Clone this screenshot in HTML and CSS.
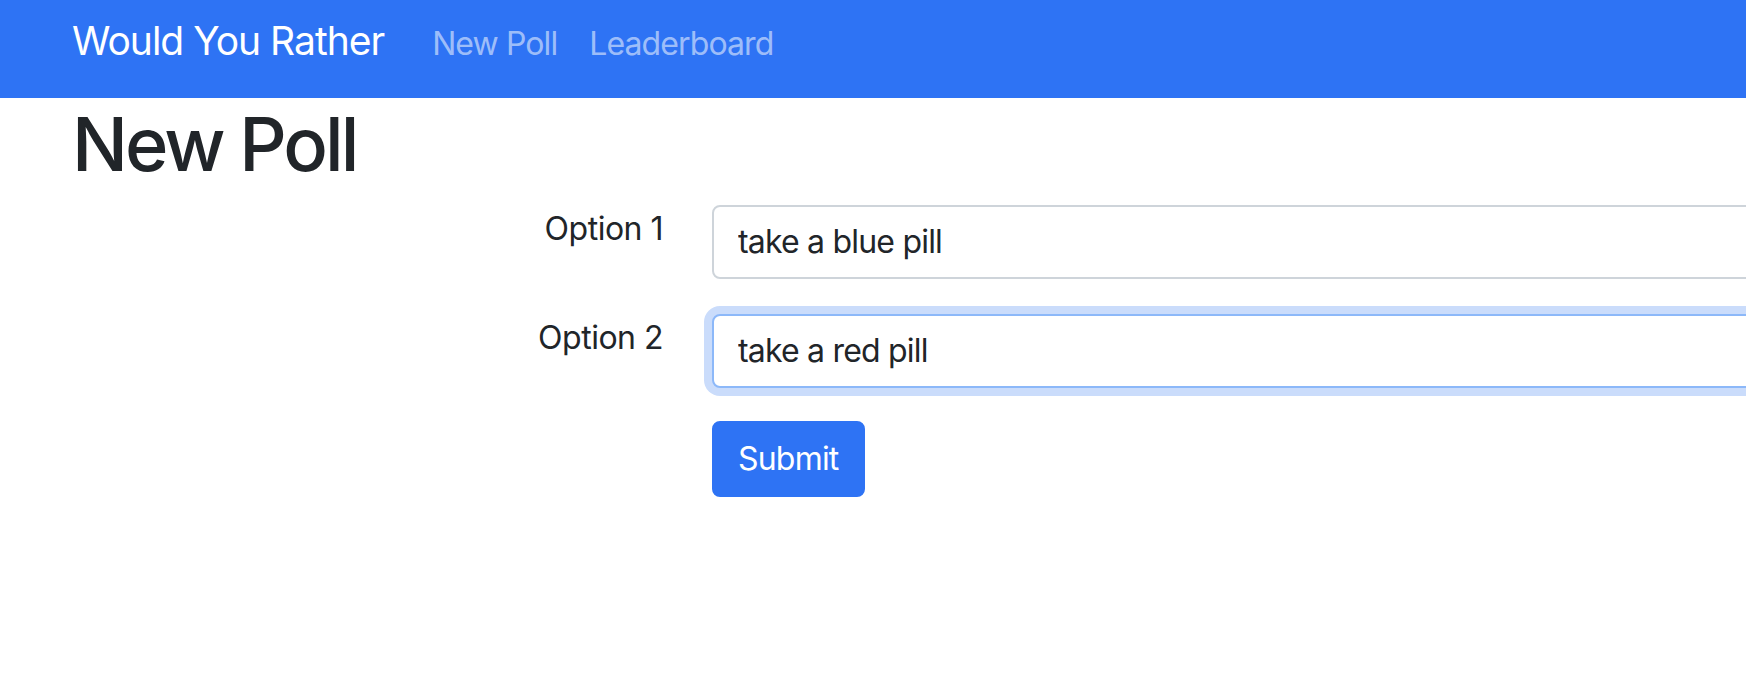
FILE: index.html
```html
<!DOCTYPE html>
<html lang="en">
<head>
<meta charset="utf-8">
<title>Would You Rather</title>
<link rel="stylesheet" href="styles.css">
</head>
<body>
<nav class="navbar">
  <a class="brand" href="#">Would You Rather</a>
  <a class="nav-link" href="#">New Poll</a>
  <a class="nav-link" href="#">Leaderboard</a>
</nav>
<main class="container">
  <h1 class="title">New Poll</h1>
  <form class="poll-form">
    <div class="row row-first">
      <label class="label" for="opt1">Option 1</label>
      <input class="input" id="opt1" type="text" value="take a blue pill">
    </div>
    <div class="row row-second">
      <label class="label" for="opt2">Option 2</label>
      <input class="input input-focus" id="opt2" type="text" value="take a red pill">
    </div>
    <div class="row">
      <span class="label"></span>
      <div><button class="btn" type="button">Submit</button></div>
    </div>
  </form>
</main>
</body>
</html>
```
FILE: styles.css
```css
html {
  overflow: hidden;
}
body {
  margin: 0;
  font-family: Inter, "Liberation Sans", sans-serif;
  color: #212529;
  background: #fff;
}
.navbar {
  height: 98px;
  box-sizing: border-box;
  background: #2e73f4;
  display: flex;
  align-items: baseline;
  padding: 11px 0 0 72px;
}
.brand {
  font-size: 39px;
  line-height: 60px;
  letter-spacing: -1px;
  color: #fff;
  text-decoration: none;
  margin-right: 32px;
}
.nav-link {
  font-size: 32px;
  line-height: 48px;
  letter-spacing: -0.9px;
  color: rgba(255, 255, 255, 0.55);
  text-decoration: none;
  padding: 0 16px;
}
.container {
  padding-left: 72px;
}
.title {
  margin: 2px 0 16px;
  font-size: 74px;
  line-height: 1.2;
  font-weight: 500;
  letter-spacing: -3px;
}
.poll-form {
  display: flex;
  flex-direction: column;
}
.row {
  display: grid;
  grid-template-columns: 591px 1400px;
  column-gap: 49px;
  align-items: start;
}
.row-first {
  margin-bottom: 35px;
}
.row-second {
  margin-bottom: 33px;
}
.label {
  text-align: right;
  font-size: 32px;
  line-height: 48px;
  letter-spacing: -0.5px;
}
.input {
  box-sizing: border-box;
  height: 74px;
  width: 100%;
  padding: 0 24px;
  font-family: inherit;
  font-size: 32px;
  letter-spacing: -0.8px;
  color: #212529;
  border: 2px solid #ced4da;
  border-radius: 8px;
  background: #fff;
  outline: none;
}
.input-focus {
  border-color: #8cb8f9;
  box-shadow: 0 0 0 8px #cadcfb;
}
.btn {
  font-family: inherit;
  font-size: 32px;
  line-height: 48px;
  letter-spacing: -0.8px;
  padding: 12px 24px;
  border: 2px solid #2e73f4;
  border-radius: 8px;
  background: #2e73f4;
  color: #fff;
  cursor: pointer;
}
```
